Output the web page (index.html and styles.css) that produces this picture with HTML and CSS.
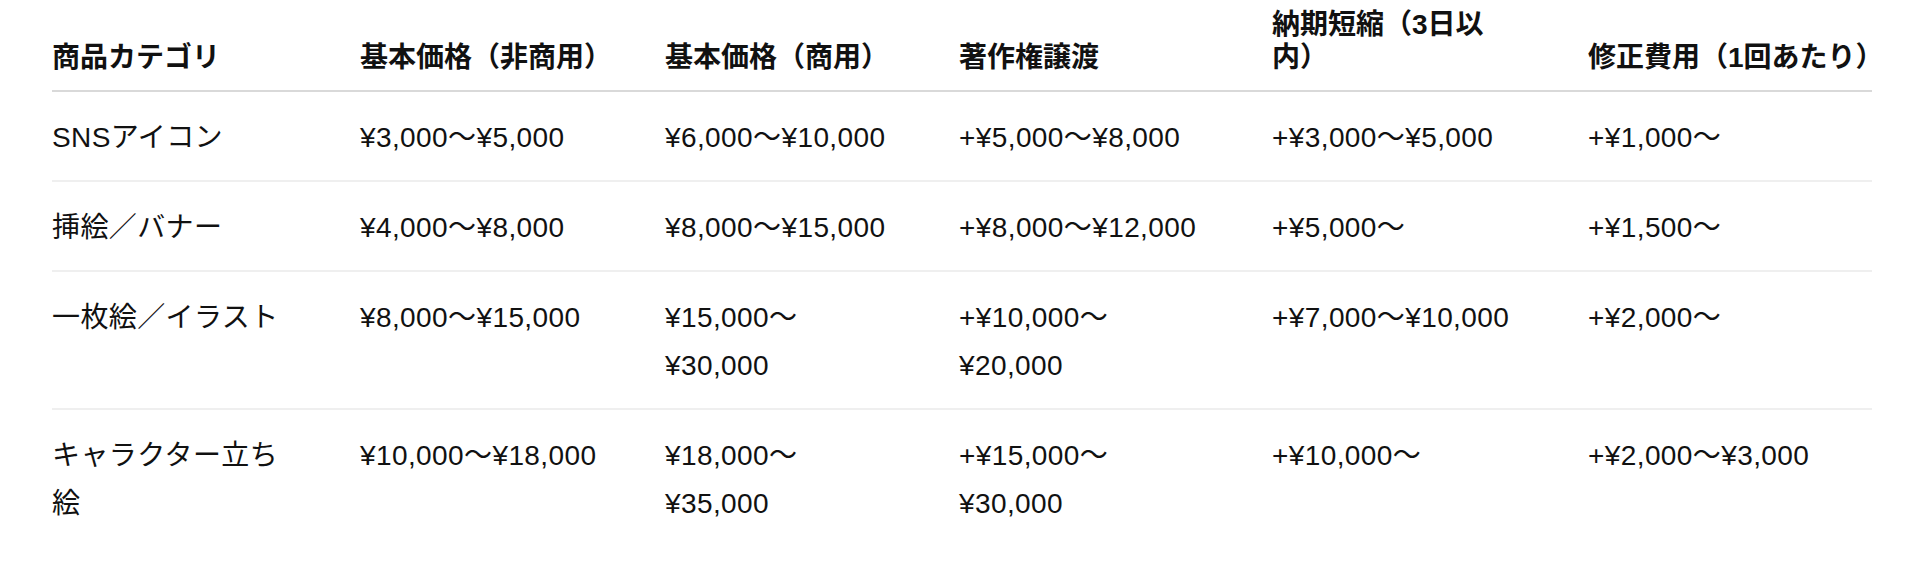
FILE: index.html
```html
<!DOCTYPE html>
<html lang="ja">
<head>
<meta charset="utf-8">
<title>料金表</title>
<link rel="stylesheet" href="styles.css">
</head>
<body>
<div class="wrap">
  <table class="price-table">
    <colgroup>
      <col class="c1">
      <col class="c2">
      <col class="c3">
      <col class="c4">
      <col class="c5">
      <col class="c6">
    </colgroup>
    <thead>
      <tr>
        <th>商品カテゴリ</th>
        <th>基本価格（非商用）</th>
        <th>基本価格（商用）</th>
        <th>著作権譲渡</th>
        <th>納期短縮（3日以<br>内）</th>
        <th>修正費用（1回あたり）</th>
      </tr>
    </thead>
    <tbody>
      <tr>
        <td>SNSアイコン</td>
        <td>¥3,000〜¥5,000</td>
        <td>¥6,000〜¥10,000</td>
        <td>+¥5,000〜¥8,000</td>
        <td>+¥3,000〜¥5,000</td>
        <td>+¥1,000〜</td>
      </tr>
      <tr>
        <td>挿絵／バナー</td>
        <td>¥4,000〜¥8,000</td>
        <td>¥8,000〜¥15,000</td>
        <td>+¥8,000〜¥12,000</td>
        <td>+¥5,000〜</td>
        <td>+¥1,500〜</td>
      </tr>
      <tr>
        <td>一枚絵／イラスト</td>
        <td>¥8,000〜¥15,000</td>
        <td>¥15,000〜<br>¥30,000</td>
        <td>+¥10,000〜<br>¥20,000</td>
        <td>+¥7,000〜¥10,000</td>
        <td>+¥2,000〜</td>
      </tr>
      <tr>
        <td>キャラクター立ち<br>絵</td>
        <td>¥10,000〜¥18,000</td>
        <td>¥18,000〜<br>¥35,000</td>
        <td>+¥15,000〜<br>¥30,000</td>
        <td>+¥10,000〜</td>
        <td>+¥2,000〜¥3,000</td>
      </tr>
    </tbody>
  </table>
</div>
</body>
</html>
```

FILE: styles.css
```css
html, body {
  margin: 0;
  padding: 0;
  background: #ffffff;
}

body {
  font-family: "Liberation Sans", "Noto Sans CJK JP", sans-serif;
  color: #111111;
}

.wrap {
  padding: 8px 56px 0 52px;
}

.price-table {
  table-layout: fixed;
  width: 1820px;
  border-collapse: collapse;
  font-size: 28px;
}

.c1 { width: 308px; }
.c2 { width: 305px; }
.c3 { width: 294px; }
.c4 { width: 313px; }
.c5 { width: 316px; }
.c6 { width: 284px; }

.price-table th {
  text-align: left;
  font-weight: 700;
  line-height: 33px;
  vertical-align: bottom;
  padding: 0 0 16px 0;
  white-space: nowrap;
  border-bottom: 2px solid #d9d9d9;
}

.price-table td {
  text-align: left;
  font-weight: 400;
  line-height: 48px;
  letter-spacing: 0.4px;
  vertical-align: top;
  padding: 22px 0 18px;
  white-space: nowrap;
  border-bottom: 2px solid #efefef;
}

.price-table tbody tr:last-child td {
  border-bottom: none;
}
```
